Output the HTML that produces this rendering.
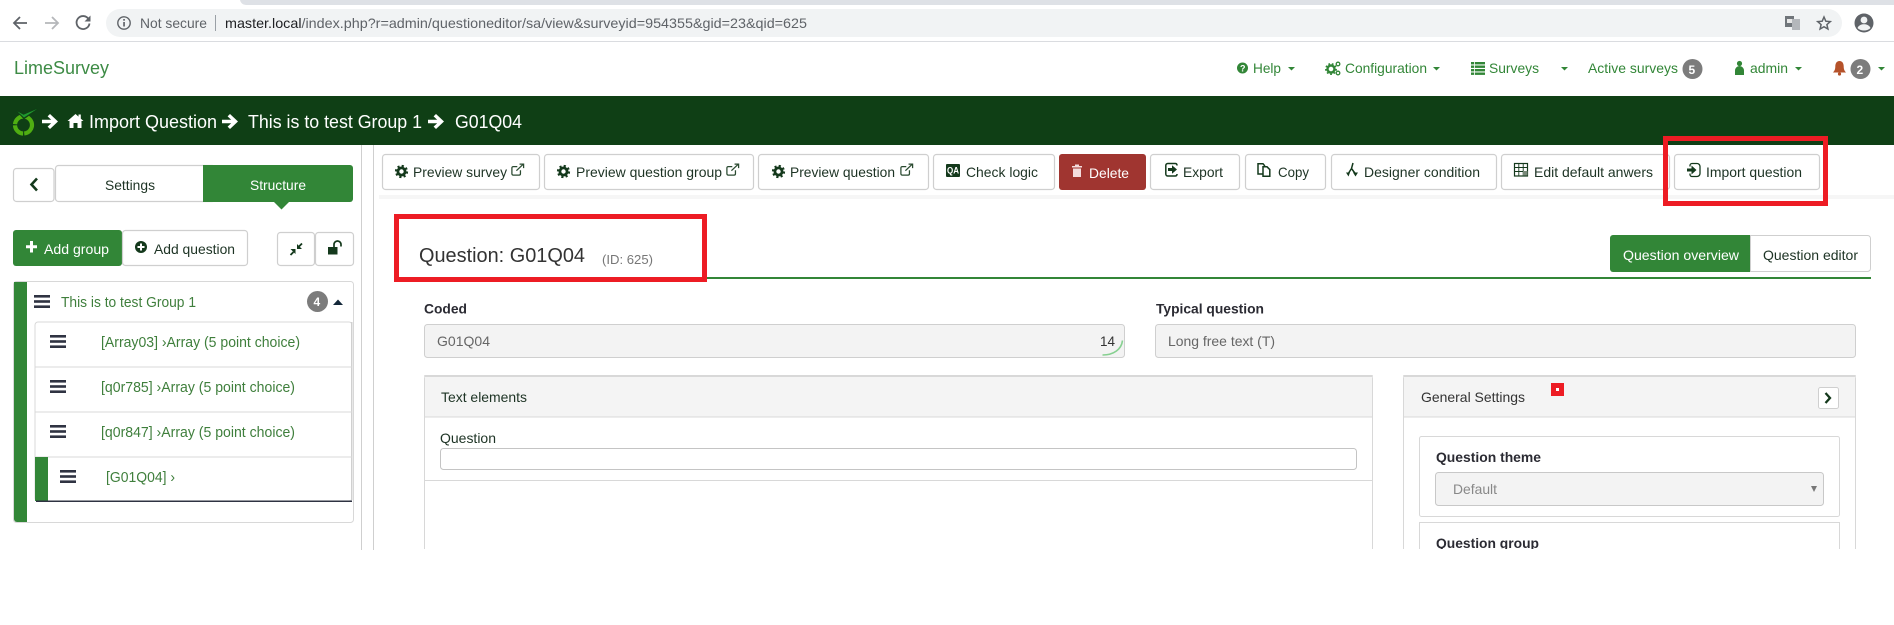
<!DOCTYPE html>
<html><head><meta charset="utf-8"><title>LimeSurvey</title>
<style>
html,body{margin:0;padding:0;background:#fff;width:1894px;height:625px;overflow:hidden}
svg{display:block}
text{font-family:"Liberation Sans",sans-serif;font-size:14px;fill:#1d3324}
.n{fill:#328637}
.w{fill:#fff}
.b{font-weight:bold;fill:#2b2b33}
.h{font-size:18px;fill:#fff}
.li{fill:#3f7f3c;font-size:14.5px}
.btn{fill:#fff;stroke:#cfcfcf;stroke-width:1.2}
</style></head><body>
<svg width="1894" height="625" viewBox="0 0 1894 625" xmlns="http://www.w3.org/2000/svg">
<defs>
<g id="gear"><circle cx="6.5" cy="6.5" r="3.6" fill="none" stroke="#14391c" stroke-width="2.8"/><circle cx="6.5" cy="6.5" r="5.6" fill="none" stroke="#14391c" stroke-width="2" stroke-dasharray="2.2 2.2"/></g>
<g id="ext" fill="none" stroke="#2a4a30" stroke-width="1.4" transform="scale(.9)"><path d="M10.5 8v4a1.500 1.500 0 0 1-1.500 1.500H2.500A1.500 1.500 0 0 1 1 12V5.500A1.500 1.500 0 0 1 2.500 4H7"/><path d="M6 8.500L13.500 1.500"/><path d="M9.500 1.200h4.500v4.500"/></g>
<path id="arr" d="M8 0L16 7.500L8 15L5.600 12.600L9.200 9.300H0V5.700H9.200L5.600 2.400Z" fill="#fff"/>
<g id="ham" fill="#2f3342"><rect width="16" height="2.600" y="0"/><rect width="16" height="2.600" y="5.200"/><rect width="16" height="2.600" y="10.400"/></g>
</defs>

<!-- Browser chrome -->
<rect x="247" y="0" width="1647" height="5" fill="#dee1e6"/>
<path d="M240 0h12v5h-6a6 6 0 0 1-6-5z" fill="#dee1e6"/>
<rect x="106" y="9" width="1736" height="28" rx="14" fill="#f1f3f4"/>
<rect x="0" y="41" width="1894" height="1" fill="#dadce0"/>
<g fill="none" stroke="#5f6368" stroke-width="1.800">
<path d="M27 23H14.500M20 17l-6 6 6 6"/>
<path d="M45 23H58M52 17l6 6-6 6" stroke="#b5b7ba"/>
<path d="M88.500 19a6.500 6.500 0 1 0 1 4.500"/>
<circle cx="124" cy="23" r="6.200" stroke-width="1.400"/>
</g>
<path d="M90.500 15.500v6h-6z" fill="#5f6368"/>
<rect x="123.200" y="22" width="1.700" height="4.500" fill="#5f6368"/><rect x="123.200" y="19" width="1.700" height="1.700" fill="#5f6368"/>
<text x="140" y="28" textLength="67" lengthAdjust="spacingAndGlyphs" style="fill:#5f6368">Not secure</text>
<rect x="215" y="15" width="1" height="16" fill="#9aa0a6"/>
<text x="225" y="28" textLength="582" lengthAdjust="spacingAndGlyphs" style="fill:#5f6368"><tspan style="fill:#202124">master.local</tspan>/index.php?r=admin/questioneditor/sa/view&amp;surveyid=954355&amp;gid=23&amp;qid=625</text>
<rect x="1785" y="16" width="9" height="11" fill="#70757a"/><rect x="1792" y="19" width="8" height="11" fill="#b4b7bb"/><rect x="1787" y="19" width="5" height="4" fill="#e8e8e8"/>
<path d="M1824 17l1.800 4.200 4.500.4-3.400 3 1 4.400-3.900-2.300-3.900 2.300 1-4.400-3.400-3 4.500-.4z" fill="none" stroke="#5f6368" stroke-width="1.500"/>
<circle cx="1864" cy="23" r="9.500" fill="#5f6368"/><circle cx="1864" cy="20" r="3.400" fill="#f1f3f4"/><path d="M1857.500 28c1.500-3 4-3.700 6.500-3.700s5 .7 6.500 3.700c-1.500 1.600-4 2.500-6.500 2.500s-5-.9-6.500-2.500z" fill="#f1f3f4"/>

<!-- Top nav -->
<text x="14" y="74" textLength="95" lengthAdjust="spacingAndGlyphs" style="font-size:18px;fill:#3d8b45">LimeSurvey</text>
<g>
<circle cx="1242.500" cy="68" r="5.500" fill="#328637"/><text x="1240" y="71.500" style="font-size:9px;font-weight:bold;fill:#fff">?</text>
<text class="n" x="1253" y="73" textLength="28" lengthAdjust="spacingAndGlyphs">Help</text>
<path d="M1288 67h7l-3.500 3.500z" fill="#328637"/>
<circle cx="1331" cy="69" r="3.500" fill="none" stroke="#328637" stroke-width="2.400"/><circle cx="1331" cy="69" r="5.200" fill="none" stroke="#328637" stroke-width="1.500" stroke-dasharray="1.800 1.800"/>
<circle cx="1338" cy="64" r="1.800" fill="none" stroke="#328637" stroke-width="1.300"/><circle cx="1338" cy="73" r="1.800" fill="none" stroke="#328637" stroke-width="1.300"/>
<text class="n" x="1345" y="73" textLength="82" lengthAdjust="spacingAndGlyphs">Configuration</text>
<path d="M1433 67h7l-3.500 3.500z" fill="#328637"/>
<g fill="#328637"><rect x="1471" y="62" width="14" height="2.400"/><rect x="1471" y="65.500" width="14" height="2.400"/><rect x="1471" y="69" width="14" height="2.400"/><rect x="1471" y="72.500" width="14" height="2.400"/></g>
<g fill="#fff"><rect x="1474" y="61" width=".8" height="15"/></g>
<text class="n" x="1489" y="73" textLength="50" lengthAdjust="spacingAndGlyphs">Surveys</text>
<path d="M1561 67h7l-3.500 3.500z" fill="#328637"/>
<text class="n" x="1588" y="73" textLength="90" lengthAdjust="spacingAndGlyphs">Active surveys</text>
<circle cx="1692.500" cy="69" r="10" fill="#7c7c7c"/><text class="w" x="1688.500" y="74" style="font-weight:bold;font-size:12px">5</text>
<circle cx="1739.500" cy="63.500" r="2.600" fill="#328637"/><path d="M1735 75v-4.500a4.500 4.500 0 0 1 9 0V75z" fill="#328637"/>
<text class="n" x="1750" y="73" textLength="38" lengthAdjust="spacingAndGlyphs">admin</text>
<path d="M1795 67h7l-3.500 3.500z" fill="#328637"/>
<path d="M1839.500 61c3 0 4.200 2.500 4.200 5.500 0 3 1 4.500 2.300 6h-13c1.300-1.500 2.300-3 2.300-6 0-3 1.200-5.500 4.200-5.500z" fill="#b5522a"/><circle cx="1839.500" cy="74" r="1.600" fill="#b5522a"/>
<circle cx="1860.500" cy="69" r="10" fill="#7c7c7c"/><text class="w" x="1856.500" y="74" style="font-weight:bold;font-size:12px">2</text>
<path d="M1878 67h7l-3.500 3.500z" fill="#328637"/>
</g>

<!-- Green breadcrumb bar -->
<rect x="0" y="96" width="1894" height="49" fill="#0f3f15"/>
<circle cx="23.500" cy="125" r="8.500" fill="none" stroke="#4fae12" stroke-width="4.200" stroke-dasharray="12.500 1.200"/>
<path d="M17 110.500l6 3L37 109 24 118z" fill="#0f3f15" stroke="#0f3f15" stroke-width="2"/>
<path d="M17.500 111.500l6 3.200L37 109 24 117.500z" fill="#1f9a2e"/>
<use href="#arr" x="42" y="114"/>
<path d="M75.500 114l3 2.600V114.500h2.300v4.100l2.700 2.400h-2v7h-4v-5h-4v5h-4v-7h-2z" fill="#fff"/>
<text class="h" x="89" y="128" textLength="128" lengthAdjust="spacingAndGlyphs">Import Question</text>
<use href="#arr" x="222" y="114"/>
<text class="h" x="248" y="128" textLength="174" lengthAdjust="spacingAndGlyphs">This is to test Group 1</text>
<use href="#arr" x="428" y="114"/>
<text class="h" x="455" y="128" textLength="67" lengthAdjust="spacingAndGlyphs">G01Q04</text>

<!-- Sidebar separators -->
<rect x="361" y="145" width="1" height="405" fill="#cfcfcf"/>
<rect x="373" y="145" width="1" height="405" fill="#cfcfcf"/>

<!-- Sidebar -->
<rect class="btn" x="13.500" y="168.500" width="40.500" height="33" rx="3"/>
<path d="M37 178.500l-5.500 6 5.500 6" fill="none" stroke="#14391c" stroke-width="2.600"/>
<rect class="btn" x="55.500" y="165.500" width="160" height="36" rx="3"/>
<text x="105" y="190" textLength="50" lengthAdjust="spacingAndGlyphs">Settings</text>
<path d="M203 165h147a3 3 0 0 1 3 3v31a3 3 0 0 1-3 3H203z" fill="#328637"/>
<text class="w" x="250" y="190" textLength="56" lengthAdjust="spacingAndGlyphs">Structure</text>
<path d="M274 202h15l-7.500 7.500z" fill="#328637"/>

<rect x="13" y="230" width="109" height="36" rx="3" fill="#328637"/>
<path d="M30 241h3v4.200h4v3h-4v4.300h-3v-4.300h-4v-3h4z" fill="#fff"/>
<text class="w" x="44" y="254" textLength="65" lengthAdjust="spacingAndGlyphs">Add group</text>
<rect class="btn" x="122.500" y="230.500" width="125" height="35" rx="3"/>
<circle cx="141" cy="247" r="6" fill="#14391c"/><path d="M140 243.500h2v2.500h2.500v2H142v2.500h-2V248h-2.500v-2h2.500z" fill="#fff"/>
<text x="154" y="254" textLength="81" lengthAdjust="spacingAndGlyphs">Add question</text>
<rect class="btn" x="277.500" y="232.500" width="37" height="33" rx="3"/>
<rect class="btn" x="315.500" y="232.500" width="38" height="33" rx="3"/>
<path d="M295.500 249v5l-5-5z M297 249v-5l5 5z" fill="#14391c"/>
<path d="M290.500 255l3-3M302 243.500l-3 3" stroke="#14391c" stroke-width="1.800" fill="none"/>
<rect x="328" y="247" width="9.500" height="7.500" fill="#14391c"/><path d="M334 247v-2.500a3.500 3.500 0 0 1 7 0v2" fill="none" stroke="#14391c" stroke-width="1.700"/>

<rect x="13.500" y="281.500" width="340" height="241" rx="3" fill="#fff" stroke="#d8d8d8"/>
<path d="M14 282h13v240H17a3 3 0 0 1-3-3z" fill="#328637"/>
<use href="#ham" x="34" y="295"/>
<text class="li" x="61" y="307" textLength="135" lengthAdjust="spacingAndGlyphs">This is to test Group 1</text>
<circle cx="317.500" cy="301.500" r="10.500" fill="#7c7c7c"/><text class="w" x="313.500" y="306" style="font-weight:bold;font-size:12px">4</text>
<path d="M333 305l5-5.500 5 5.500z" fill="#14283a"/>

<rect x="35" y="322" width="317" height="179" rx="3" fill="#fff" stroke="#d8d8d8"/>
<rect x="351" y="322" width="1.500" height="178" fill="#d0d0d0"/>
<rect x="35" y="366.500" width="317" height="1" fill="#d8d8d8"/>
<rect x="35" y="411.500" width="317" height="1" fill="#d8d8d8"/>
<rect x="35" y="456.500" width="317" height="1" fill="#d8d8d8"/>
<rect x="35" y="457" width="13" height="44" fill="#328637"/>
<rect x="36" y="500.500" width="316" height="1.500" fill="#2f3342"/>
<use href="#ham" x="50" y="335"/>
<use href="#ham" x="50" y="380"/>
<use href="#ham" x="50" y="425"/>
<use href="#ham" x="60" y="470"/>
<text class="li" x="101" y="347" textLength="199" lengthAdjust="spacingAndGlyphs">[Array03] ›Array (5 point choice)</text>
<text class="li" x="101" y="392" textLength="194" lengthAdjust="spacingAndGlyphs">[q0r785] ›Array (5 point choice)</text>
<text class="li" x="101" y="437" textLength="194" lengthAdjust="spacingAndGlyphs">[q0r847] ›Array (5 point choice)</text>
<text class="li" x="106" y="482" textLength="69" lengthAdjust="spacingAndGlyphs">[G01Q04] ›</text>

<!-- Toolbar -->
<rect x="379" y="195" width="1515" height="4" fill="#f6f6f6"/>
<rect class="btn" x="382.500" y="154.500" width="157" height="35" rx="3"/>
<rect class="btn" x="544.500" y="154.500" width="209" height="35" rx="3"/>
<rect class="btn" x="758.500" y="154.500" width="170" height="35" rx="3"/>
<rect class="btn" x="933.500" y="154.500" width="121" height="35" rx="3"/>
<rect x="1059" y="154" width="87" height="36" rx="3" fill="#a03530"/>
<rect class="btn" x="1150.500" y="154.500" width="89" height="35" rx="3"/>
<rect class="btn" x="1245.500" y="154.500" width="80" height="35" rx="3"/>
<rect class="btn" x="1331.500" y="154.500" width="165" height="35" rx="3"/>
<rect class="btn" x="1501.500" y="154.500" width="168" height="35" rx="3"/>
<rect class="btn" x="1674.500" y="154.500" width="145" height="35" rx="3"/>

<use href="#gear" x="395" y="165"/>
<text x="413" y="177" textLength="94" lengthAdjust="spacingAndGlyphs">Preview survey</text>
<use href="#ext" x="511" y="163"/>
<use href="#gear" x="557" y="165"/>
<text x="576" y="177" textLength="146" lengthAdjust="spacingAndGlyphs">Preview question group</text>
<use href="#ext" x="726" y="163"/>
<use href="#gear" x="772" y="165"/>
<text x="790" y="177" textLength="105" lengthAdjust="spacingAndGlyphs">Preview question</text>
<use href="#ext" x="900" y="163"/>
<rect x="946" y="164" width="14" height="13" rx="1" fill="#14391c"/>
<text x="947" y="173.500" textLength="12" lengthAdjust="spacingAndGlyphs" style="font-size:9px;font-weight:bold;fill:#fff">QA</text>
<text x="966" y="177" textLength="72" lengthAdjust="spacingAndGlyphs">Check logic</text>
<path d="M1072 166h10v1.500h-10zM1075 164.500h4v1.500h-4zM1073 168.500h8v8.500h-8z" fill="#f3dcdc"/>
<text class="w" x="1089" y="178" textLength="40" lengthAdjust="spacingAndGlyphs">Delete</text>
<path d="M1177 165.500v-.5a1.800 1.800 0 0 0-1.800-1.500h-7.400a2 2 0 0 0-2 2v8.500a2 2 0 0 0 2 2h7.400a1.800 1.800 0 0 0 1.800-1.500v-.5" fill="none" stroke="#14391c" stroke-width="1.500"/>
<path d="M1168 168h4v-2.800l5 4.300-5 4.300v-2.800h-4z" fill="#14391c"/>
<text x="1183" y="177" textLength="40" lengthAdjust="spacingAndGlyphs">Export</text>
<path d="M1258 163.800h5l1.500 1.700v8.500H1258z" fill="none" stroke="#14391c" stroke-width="1.500"/>
<path d="M1263 166.800h4l2.800 2.800v6.600H1263z" fill="#fff" stroke="#14391c" stroke-width="1.500"/>
<text x="1278" y="177" textLength="31" lengthAdjust="spacingAndGlyphs">Copy</text>
<path d="M1353 163l-1.500 5.500-3.500 5.500M1351.500 168.500l4 5.500" fill="none" stroke="#14391c" stroke-width="1.500"/>
<path d="M1346 172.500h4l-1.500 4zM1353 172.500h5l-2.500 4z" fill="#14391c"/>
<text x="1364" y="177" textLength="116" lengthAdjust="spacingAndGlyphs">Designer condition</text>
<rect x="1514.500" y="163.500" width="13" height="12.500" fill="none" stroke="#14391c" stroke-width="1.200"/>
<path d="M1514.500 167.500h13M1514.500 171.500h13M1518.800 163.500v12.500M1523.200 163.500v12.500" stroke="#14391c" stroke-width=".9"/>
<rect x="1523" y="171" width="4.500" height="4.500" fill="#7a8a7a"/>
<text x="1534" y="177" textLength="119" lengthAdjust="spacingAndGlyphs">Edit default anwers</text>
<path d="M1690 166.500v-1a2 2 0 0 1 2-2h5a3 3 0 0 1 3 3v7a3 3 0 0 1-3 3h-5a2 2 0 0 1-2-2v-1" fill="none" stroke="#14391c" stroke-width="1.300"/>
<path d="M1687 168.500h4.500v-3l5 4.500-5 4.500v-3H1687z" fill="#14391c"/>
<text x="1706" y="177" textLength="96" lengthAdjust="spacingAndGlyphs">Import question</text>

<!-- Heading -->
<rect x="707" y="277" width="1164" height="2" fill="#328637"/>
<text x="419" y="262" textLength="166" lengthAdjust="spacingAndGlyphs" style="font-size:20px;fill:#333">Question: G01Q04</text>
<text x="602" y="264" textLength="51" lengthAdjust="spacingAndGlyphs" style="font-size:12.500px;fill:#777">(ID: 625)</text>
<path d="M1750 235h-137a3 3 0 0 0-3 3v31a3 3 0 0 0 3 3h137z" fill="#328637"/>
<path d="M1750.500 235.500h117a3 3 0 0 1 3 3v30a3 3 0 0 1-3 3h-117z" fill="#fff" stroke="#cfcfcf"/>
<text class="w" x="1623" y="260" textLength="116" lengthAdjust="spacingAndGlyphs">Question overview</text>
<text x="1763" y="260" textLength="95" lengthAdjust="spacingAndGlyphs">Question editor</text>

<!-- Fields -->
<text class="b" x="424" y="313.500" textLength="43" lengthAdjust="spacingAndGlyphs">Coded</text>
<text class="b" x="1156" y="313.500" textLength="108" lengthAdjust="spacingAndGlyphs">Typical question</text>
<rect x="424.500" y="324.500" width="700" height="33" rx="3" fill="#f3f3f3" stroke="#cfcfcf"/>
<text x="437" y="346" textLength="53" lengthAdjust="spacingAndGlyphs" style="fill:#666">G01Q04</text>
<text x="1100" y="346" textLength="15" lengthAdjust="spacingAndGlyphs" style="fill:#333">14</text>
<path d="M1122.500 340.500c-1 9-9 14.500-20 14.500" fill="none" stroke="#86d090" stroke-width="1.600"/>
<rect x="1155.500" y="324.500" width="700" height="33" rx="3" fill="#f3f3f3" stroke="#cfcfcf"/>
<text x="1168" y="346" textLength="107" lengthAdjust="spacingAndGlyphs" style="fill:#666">Long free text (T)</text>

<!-- Panels (clipped at y=549) -->
<svg x="0" y="370" width="1894" height="179" viewBox="0 370 1894 179">
<rect x="424.500" y="375.500" width="948" height="260" rx="3" fill="#fff" stroke="#d8d8d8"/>
<path d="M425 376h947v41H425z" fill="#f4f4f4"/>
<rect x="424" y="375" width="949" height="2" rx="1" fill="#d8d8d8"/>
<rect x="425" y="416.500" width="947" height="1" fill="#d8d8d8"/>
<text x="441" y="402" textLength="86" lengthAdjust="spacingAndGlyphs">Text elements</text>
<text x="440" y="443" textLength="56" lengthAdjust="spacingAndGlyphs">Question</text>
<rect x="440.500" y="448.500" width="916" height="21" rx="3" fill="#fff" stroke="#c4c4c4"/>
<rect x="425" y="480" width="947" height="1" fill="#d8d8d8"/>

<rect x="1403.500" y="375.500" width="452" height="260" rx="3" fill="#fff" stroke="#d8d8d8"/>
<path d="M1404 376h451v41h-451z" fill="#f4f4f4"/>
<rect x="1403" y="375" width="453" height="2" rx="1" fill="#d8d8d8"/>
<rect x="1404" y="416.500" width="451" height="1" fill="#d8d8d8"/>
<text x="1421" y="402" textLength="104" lengthAdjust="spacingAndGlyphs" style="fill:#333">General Settings</text>
<rect x="1551" y="383" width="13" height="13" fill="#ed1c24"/><rect x="1556" y="388" width="3" height="3" fill="#fff"/>
<rect x="1818.500" y="387.500" width="20" height="21" rx="2" fill="#fff" stroke="#cfcfcf"/>
<path d="M1825.500 393l4.500 5-4.500 5" fill="none" stroke="#14391c" stroke-width="2.300"/>
<rect x="1419.500" y="436.500" width="420" height="80" rx="2" fill="#fff" stroke="#d8d8d8"/>
<text class="b" x="1436" y="462" textLength="105" lengthAdjust="spacingAndGlyphs">Question theme</text>
<rect x="1435.500" y="472.500" width="388" height="33" rx="3" fill="#f3f3f3" stroke="#c8c8c8"/>
<text x="1453" y="494" textLength="44" lengthAdjust="spacingAndGlyphs" style="fill:#888">Default</text>
<path d="M1811 486h6l-3 6z" fill="#777"/>
<rect x="1419.500" y="522.500" width="420" height="80" fill="#fff" stroke="#d8d8d8"/>
<text class="b" x="1436" y="548" textLength="103" lengthAdjust="spacingAndGlyphs">Question group</text>
</svg>

<!-- Annotation boxes -->
<rect x="1665.500" y="138.500" width="160" height="65" fill="none" stroke="#ed1c24" stroke-width="5"/>
<rect x="396.500" y="216.500" width="308" height="63" fill="none" stroke="#ed1c24" stroke-width="5"/>
</svg>
</body></html>
